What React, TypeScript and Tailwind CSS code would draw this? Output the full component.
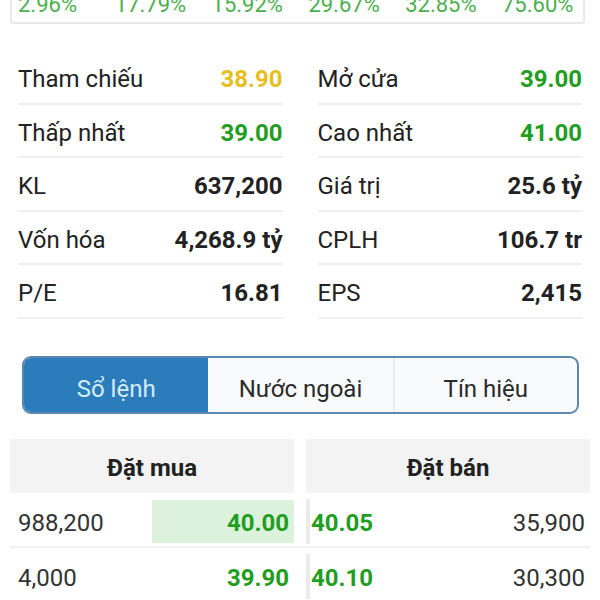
import React from "react";

const percents = ["2.96%", "17.79%", "15.92%", "29.67%", "32.85%", "75.60%"];

type Stat = { label: string; value: string; tone: "yellow" | "green" | "dark" };

const stats: [Stat, Stat][] = [
  [
    { label: "Tham chiếu", value: "38.90", tone: "yellow" },
    { label: "Mở cửa", value: "39.00", tone: "green" },
  ],
  [
    { label: "Thấp nhất", value: "39.00", tone: "green" },
    { label: "Cao nhất", value: "41.00", tone: "green" },
  ],
  [
    { label: "KL", value: "637,200", tone: "dark" },
    { label: "Giá trị", value: "25.6 tỷ", tone: "dark" },
  ],
  [
    { label: "Vốn hóa", value: "4,268.9 tỷ", tone: "dark" },
    { label: "CPLH", value: "106.7 tr", tone: "dark" },
  ],
  [
    { label: "P/E", value: "16.81", tone: "dark" },
    { label: "EPS", value: "2,415", tone: "dark" },
  ],
];

const toneClass = {
  yellow: "text-[#e6bf1e]",
  green: "text-[#1f9e22]",
  dark: "text-[#222222]",
};

const orders = [
  { buyVol: "988,200", buyPrice: "40.00", sellPrice: "40.05", sellVol: "35,900", best: true },
  { buyVol: "4,000", buyPrice: "39.90", sellPrice: "40.10", sellVol: "30,300", best: false },
];

function StatCell({ stat }: { stat: Stat }) {
  return (
    <div className="flex h-[53.5px] items-center justify-between border-b-2 border-[#efefef] pt-[5px]">
      <span className="text-[24px] text-[#222222]">{stat.label}</span>
      <span className={`text-[24px] font-bold ${toneClass[stat.tone]}`}>{stat.value}</span>
    </div>
  );
}

export default function App() {
  return (
    <div className="h-[600px] w-[600px] overflow-hidden bg-white font-['Roboto','Liberation_Sans',sans-serif]">
      {/* performance strip, cut at top */}
      <div className="-mt-[20px] ml-[10px] w-[575px] rounded-b-[3px] border-2 border-[#e9e9e9] pb-[6px] pl-[6px] pt-[12px]">
        <div className="flex text-[22px] leading-[22px] text-[#4caf50]">
          {percents.map((p) => (
            <span key={p} className="w-[96.8px] shrink-0 whitespace-nowrap">
              {p}
            </span>
          ))}
        </div>
      </div>

      {/* price stats */}
      <div className="mt-[27px] grid grid-cols-2 gap-x-[35px] px-[18px]">
        {stats.map(([l, r]) => (
          <React.Fragment key={l.label}>
            <StatCell stat={l} />
            <StatCell stat={r} />
          </React.Fragment>
        ))}
      </div>

      {/* tabs */}
      <div className="ml-[22px] mt-[37px] grid h-[58px] w-[557px] grid-cols-3 overflow-hidden rounded-[9px] border-2 border-[#5a88b0] bg-[#f8fafc] text-[24px]">
        <div className="flex items-center justify-center bg-[#2b7cba] pt-[8px] text-[#d6ecfa]">Sổ lệnh</div>
        <div className="flex items-center justify-center pt-[8px] text-[#2a2a2a]">Nước ngoài</div>
        <div className="flex items-center justify-center border-l-2 border-[#ececec] pt-[8px] text-[#2a2a2a]">
          Tín hiệu
        </div>
      </div>

      {/* order book */}
      <div className="mt-[25px] px-[10px]">
        <div className="grid grid-cols-2 gap-x-[12px]">
          <div className="flex h-[54px] items-center justify-center bg-[#f3f3f3] pt-[4px] text-[24px] font-bold text-[#222222]">
            Đặt mua
          </div>
          <div className="flex h-[54px] items-center justify-center bg-[#f3f3f3] pt-[4px] text-[24px] font-bold text-[#222222]">
            Đặt bán
          </div>
        </div>

        {orders.map((o) => (
          <div key={o.buyVol} className="grid h-[55px] grid-cols-2 gap-x-[12px] border-b-2 border-[#f2f2f2]">
            <div className="flex items-center justify-between pl-[8px]">
              <span className="pt-[7px] text-[24px] text-[#333333]">{o.buyVol}</span>
              <span
                className={`mt-[4px] flex h-[43px] w-[142px] items-center justify-end pr-[5px] pt-[3px] text-[24px] font-bold text-[#1f9e22] ${
                  o.best ? "bg-[#ddf2dd]" : ""
                }`}
              >
                {o.buyPrice}
              </span>
            </div>
            <div className="flex items-center pt-[4px]">
              <div className="flex h-[45px] flex-1 items-center justify-between border-l-4 border-[#ebebeb] pl-[1px] pr-[5px] pt-[3px]">
                <span className="text-[24px] font-bold text-[#1f9e22]">{o.sellPrice}</span>
                <span className="text-[24px] text-[#333333]">{o.sellVol}</span>
              </div>
            </div>
          </div>
        ))}
      </div>
    </div>
  );
}
